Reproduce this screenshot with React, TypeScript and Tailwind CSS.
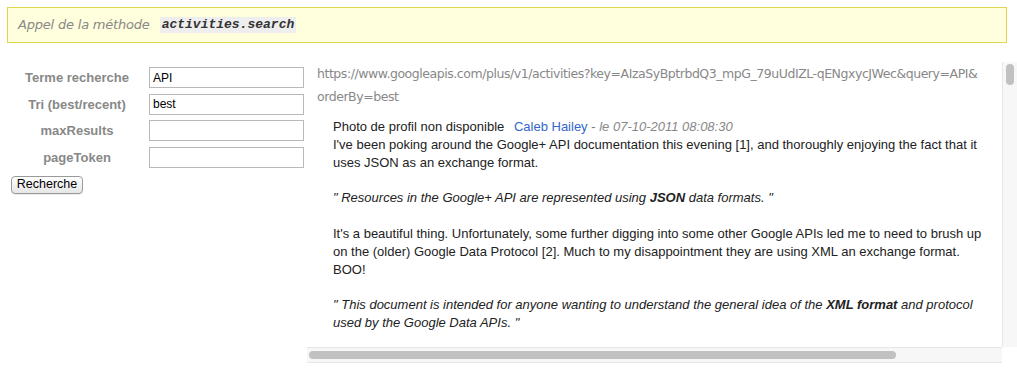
import React from "react";

const sans = { fontFamily: '"Liberation Sans", Arial, sans-serif' };

function Field({ label, value }: { label: string; value: string }) {
  return (
    <div className="flex items-center h-[21px]">
      <div className="w-[120px] text-center text-[13px] font-bold text-[#888888] leading-none">{label}</div>
      <div className="ml-[12px] w-[155px] h-[21px] border border-[#b9b9b9] bg-white flex items-center pl-[3px] text-[12px] text-black">
        {value}
      </div>
    </div>
  );
}

export default function App() {
  return (
    <div className="w-[1017px] h-[368px] bg-white overflow-hidden" style={sans}>
      <div className="mx-[7px] mt-[7px] w-[1000px] h-[36px] border border-[#e0d64a] bg-[#ffffdd] flex items-center pl-[10px]">
        <span className="italic text-[#888888] text-[13px]" style={{ fontFamily: '"DejaVu Sans", Verdana, sans-serif', letterSpacing: "-0.2px" }}>
          Appel de la méthode
        </span>
        <span
          className="ml-[10px] bg-[#eeeeee] px-[2px] text-[13px] font-bold italic text-[#333333] leading-[16px]"
          style={{ fontFamily: '"Liberation Mono", "Courier New", monospace' }}
        >
          activities.search
        </span>
      </div>
      <div className="flex mt-[19px]">
        <div className="w-[307px] shrink-0">
          <div className="flex flex-col gap-[5.5px] pl-[17px] mt-[5px]">
            <Field label="Terme recherche" value="API" />
            <Field label="Tri (best/recent)" value="best" />
            <Field label="maxResults" value="" />
            <Field label="pageToken" value="" />
          </div>
          <button className="ml-[11px] mt-[8px] w-[72px] h-[18px] rounded-[4px] border border-[#9a9a9a] bg-gradient-to-b from-white to-[#e6e6e6] text-[12.5px] text-black leading-none shadow-[0_1px_0_rgba(0,0,0,0.08)]">
            Recherche
          </button>
        </div>
        <div className="w-[710px] h-[301px] flex flex-col">
          <div className="flex h-[285px]">
            <div className="w-[695px] h-[285px] overflow-hidden">
              <div className="pl-[10px] text-[12.5px] leading-[23px] text-[#888888] whitespace-nowrap" style={{ fontFamily: '"DejaVu Sans", Verdana, sans-serif', letterSpacing: "-0.45px" }}>
                https://www.googleapis.com/plus/v1/activities?key=AIzaSyBptrbdQ3_mpG_79uUdIZL-qENgxycJWec&amp;query=API&amp;
                <br />
                orderBy=best
              </div>
              <div className="pl-[26px] mt-[10px] text-[13px] leading-[18px] text-[#222222] whitespace-nowrap">
                <div>
                  Photo de profil non disponible{" "}
                  <span className="ml-[6px] text-[#3366cc]">Caleb Hailey</span>
                  <span className="text-[#777777]"> - </span>
                  <span className="italic text-[#888888]">le 07-10-2011 08:08:30</span>
                </div>
                <div>I've been poking around the Google+ API documentation this evening [1], and thoroughly enjoying the fact that it</div>
                <div>uses JSON as an exchange format.</div>
                <div className="h-[17px]" />
                <div className="italic">
                  " Resources in the Google+ API are represented using <b>JSON</b> data formats. "
                </div>
                <div className="h-[18px]" />
                <div>It's a beautiful thing. Unfortunately, some further digging into some other Google APIs led me to need to brush up</div>
                <div>on the (older) Google Data Protocol [2]. Much to my disappointment they are using XML an exchange format.</div>
                <div>BOO!</div>
                <div className="h-[17px]" />
                <div className="italic">
                  " This document is intended for anyone wanting to understand the general idea of the <b>XML format</b> and protocol
                </div>
                <div className="italic">used by the Google Data APIs. "</div>
              </div>
            </div>
            <div className="w-[15px] h-[285px] bg-[#f7f7f7] border-l border-[#e8e8e8] pt-[2px] flex justify-center">
              <div className="w-[8px] h-[21px] rounded-full bg-[#c1c1c1]" />
            </div>
          </div>
          <div className="w-[695px] h-[16px] bg-[#f7f7f7] border-t border-b border-[#e6e6e6] flex items-center pl-[2px]">
            <div className="w-[587px] h-[8px] rounded-full bg-[#c1c1c1]" />
          </div>
        </div>
      </div>
    </div>
  );
}
